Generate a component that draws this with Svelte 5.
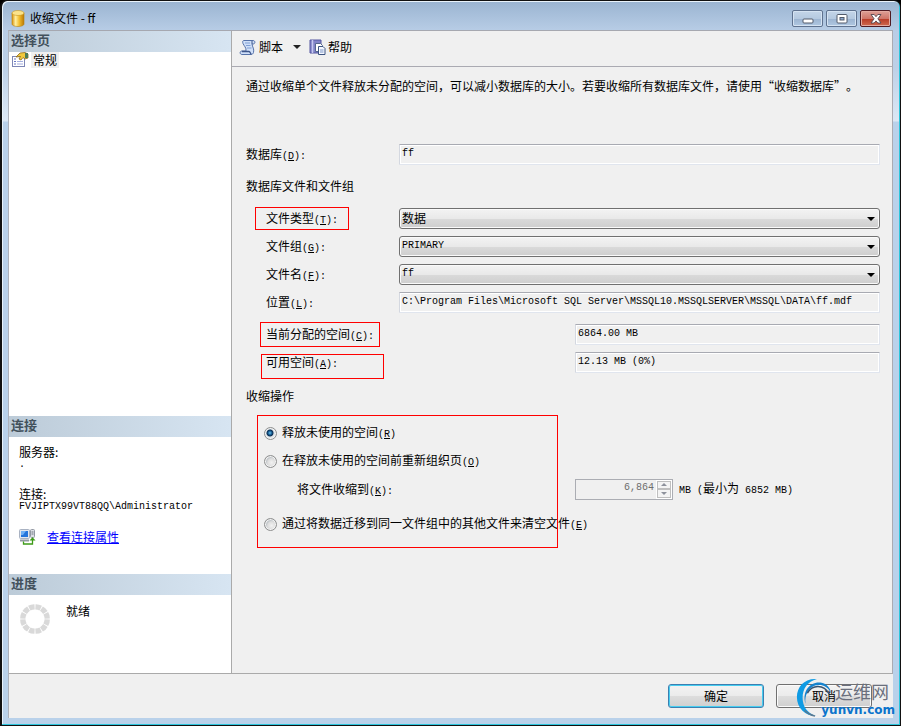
<script lang="ts">
  interface SelectRow {
    id: string;
    label: string;
    key: string;
    value: string;
    latin: boolean;
    mark?: string;
  }

  interface FieldRow {
    id: string;
    label: string;
    key: string;
    value: string;
    narrow: boolean;
    mark?: string;
  }

  const selects: SelectRow[] = [
    { id: 'file-type', label: '文件类型', key: 'T', value: '数据', latin: false, mark: 'mark-type' },
    { id: 'file-group', label: '文件组', key: 'G', value: 'PRIMARY', latin: true },
    { id: 'file-name', label: '文件名', key: 'F', value: 'ff', latin: true }
  ];

  const fields: FieldRow[] = [
    {
      id: 'location',
      label: '位置',
      key: 'L',
      value: 'C:\\Program Files\\Microsoft SQL Server\\MSSQL10.MSSQLSERVER\\MSSQL\\DATA\\ff.mdf',
      narrow: false
    },
    { id: 'allocated', label: '当前分配的空间', key: 'C', value: '6864.00 MB', narrow: true, mark: 'mark-allocated' },
    { id: 'available', label: '可用空间', key: 'A', value: '12.13 MB (0%)', narrow: true, mark: 'mark-available' }
  ];

  const spokes = Array.from({ length: 12 }, (_, i) => i * 30 + 15);

  let action = $state('release');
  let target = $state(6864);
  let targetText = $derived(target.toLocaleString('en-US'));
  let locked = $derived(action !== 'reorganize');
</script>

<div class="window" lang="zh-CN">
  <header class="titlebar">
    <svg class="db-icon" width="14" height="17" viewBox="0 0 14 17" aria-hidden="true">
      <defs>
        <linearGradient id="gold">
          <stop offset="0" stop-color="#d9920c" />
          <stop offset=".3" stop-color="#fff0a0" />
          <stop offset=".6" stop-color="#f3bd2c" />
          <stop offset="1" stop-color="#b97808" />
        </linearGradient>
      </defs>
      <path d="M1 3v11c0 1.400 2.700 2.500 6 2.500s6-1.100 6-2.500V3z" fill="url(#gold)" stroke="#b8830f" stroke-width=".6" />
      <ellipse cx="7" cy="3" rx="6" ry="2.500" fill="#fbe38a" stroke="#c7951f" stroke-width=".6" />
    </svg>
    <h1>收缩文件 - ff</h1>
    <div class="caption">
      <button class="cap" aria-label="最小化">
        <svg width="14" height="12" viewBox="0 0 14 12"><rect x="2" y="6" width="10" height="4" rx="1" fill="#fff" stroke="#525b6b" /></svg>
      </button>
      <button class="cap" aria-label="最大化">
        <svg width="14" height="12" viewBox="0 0 14 12">
          <rect x="2" y="1.500" width="10" height="8.500" rx="1" fill="#fff" stroke="#525b6b" />
          <rect x="5" y="4.500" width="4" height="2.500" fill="#8fabd0" stroke="#525b6b" />
        </svg>
      </button>
      <button class="cap close" aria-label="关闭">
        <svg width="14" height="12" viewBox="0 0 14 12">
          <path d="M2 1.500h3.200L7 3.700l1.800-2.200H12L8.900 5.800 12 10H8.800L7 7.900 5.200 10H2l3.100-4.200z" fill="#fff" stroke="#54454d" stroke-width=".9" />
        </svg>
      </button>
    </div>
  </header>

  <div class="client">
    <div class="body">
      <aside class="sidebar">
        <section class="pages">
          <h2>选择页</h2>
          <a class="page-link" href="#general">
            <svg width="18" height="16" viewBox="0 0 18 16" aria-hidden="true">
              <rect x="1.500" y="4.500" width="12" height="10" fill="#fff" stroke="#7d86b5" />
              <path d="M3 7h2M3 9.500h2M3 12h2" stroke="#6878c4" stroke-width="1.200" />
              <path d="M6 9.500h6M6 12h6" stroke="#a3aee0" stroke-width="1.200" />
              <path d="M5 5l4-4 5-.5 3 1.500v4l-3 1-2-1.500-2 2.500-2-1 1.500-2.500z" fill="#f2c83c" stroke="#8a6a1c" stroke-width=".8" />
              <path d="M14 1h3v5h-3z" fill="#4d7c55" />
            </svg>
            <span>常规</span>
          </a>
        </section>

        <section class="connection">
          <h2>连接</h2>
          <dl>
            <dt>服务器:</dt>
            <dd>.</dd>
            <dt>连接:</dt>
            <dd>FVJIPTX99VT88QQ\Administrator</dd>
          </dl>
          <div class="conn-link">
            <svg width="17" height="16" viewBox="0 0 17 16" aria-hidden="true">
              <rect x=".5" y=".5" width="10" height="9" rx="1" fill="#e3e7ee" stroke="#a9b2c2" />
              <rect x="2" y="2" width="7" height="6" fill="#2475dc" />
              <path d="M2 2h5l-3 4H2z" fill="#6fb0f5" />
              <path d="M1 11.500h9" stroke="#9298a3" stroke-width="2" />
              <rect x="11.500" y=".5" width="4" height="8" rx="1" fill="#dcdfe5" stroke="#9298a3" />
              <path d="M12.500 3h2M12.500 5h2" stroke="#6e7580" />
              <path d="M4.500 12.500v2.500h9v-4" fill="none" stroke="#3d9a17" stroke-width="1.300" />
              <path d="M10.500 11.500l3-3.200 3 3.200z" fill="#3d9a17" />
            </svg>
            <a href="#properties">查看连接属性</a>
          </div>
        </section>

        <section class="progress">
          <h2>进度</h2>
          <div class="status">
            <svg width="32" height="32" viewBox="-16 -16 32 32" aria-hidden="true">
              {#each spokes as angle}
                <path d="M-3.300-14.500Q0-15.500 3.300-14.500L2.200-9.300Q0-9.800-2.200-9.300z" fill="#d9d9d9" transform="rotate({angle})" />
              {/each}
            </svg>
            <span>就绪</span>
          </div>
        </section>
      </aside>

      <main>
        <div class="toolbar">
          <button class="tool">
            <svg width="18" height="17" viewBox="0 0 17 17" aria-hidden="true">
              <path d="M4 1.500h9.500c2.500 0 2.500 3.500 0 3.500h-1c.3 3 2.500 5 1.500 8.500-.5 1.500-1.500 2-2.500 2H2.500c-2.500 0-2.500-3.500 0-3.500h4C7 8.500 4.500 7 3.500 4.500 3 3 3 2 4 1.500z" fill="#cfdff8" stroke="#5471a8" />
              <path d="M5.500 4h5M6.500 6.500h4.500M7.500 9h4.500" stroke="#7f9ed3" />
              <path d="M2.500 12.500h7c1.500 0 1 2.500 2.500 2.500" fill="none" stroke="#3d568a" stroke-width="1.300" />
              <path d="M12.500 2v3" stroke="#3d568a" />
            </svg>
            <span>脚本</span>
          </button>
          <button class="arrow" aria-label="脚本选项"></button>
          <button class="tool">
            <svg width="17" height="17" viewBox="0 0 17 17" aria-hidden="true">
              <path d="M1 1h11v13H1z" fill="#8284c8" stroke="#5557a0" />
              <path d="M3.500 1v13" stroke="#c6c8f0" stroke-width="1.500" />
              <path d="M6.500 4.500h5l2 2v6h-7z" fill="#fff" stroke="#56688f" />
              <path d="M9.500 7.500h4.500l2 2v6h-6.500z" fill="#f5f8ff" stroke="#3d5480" />
              <path d="M11 11h3.500M11 13h3.500" stroke="#7d96c6" />
            </svg>
            <span>帮助</span>
          </button>
        </div>

        <form class="content" onsubmit={(e) => e.preventDefault()}>
          <p class="intro">通过收缩单个文件释放未分配的空间,可以减小数据库的大小。若要收缩所有数据库文件,请使用“收缩数据库”。</p>

          <div class="row database">
            <label for="database">数据库<span class="key">(<u>D</u>):</span></label>
            <input id="database" class="readonly" type="text" readonly value="ff" />
          </div>

          <h3>数据库文件和文件组</h3>

          {#each selects as item}
            <div class="row nested">
              <label for={item.id} class={item.mark}>{item.label}<span class="key">(<u>{item.key}</u>):</span></label>
              <div class="combo">
                <select id={item.id} class:latin={item.latin}>
                  <option>{item.value}</option>
                </select>
              </div>
            </div>
          {/each}

          {#each fields as item}
            <div class="row nested" class:spaced={item.id === 'allocated'}>
              <label for={item.id} class={item.mark}>{item.label}<span class="key">(<u>{item.key}</u>):</span></label>
              <input id={item.id} class="readonly" class:narrow={item.narrow} type="text" readonly value={item.value} />
            </div>
          {/each}

          <h3 class="second">收缩操作</h3>

          <div class="actions" role="radiogroup" aria-label="收缩操作">
            <label class="option">
              <input type="radio" name="action" value="release" bind:group={action} />
              <span>释放未使用的空间<span class="key">(<u>R</u>)</span></span>
            </label>
            <label class="option">
              <input type="radio" name="action" value="reorganize" bind:group={action} />
              <span>在释放未使用的空间前重新组织页<span class="key">(<u>O</u>)</span></span>
            </label>
            <div class="row target">
              <label for="target">将文件收缩到<span class="key">(<u>K</u>):</span></label>
              <div class="amount">
                <div class="spin">
                  <input id="target" type="text" disabled={locked} value={targetText} />
                  <div class="steps">
                    <button type="button" class="up" aria-label="增加" disabled={locked} onclick={() => target++}></button>
                    <button type="button" class="down" aria-label="减少" disabled={locked} onclick={() => target--}></button>
                  </div>
                </div>
                <span><span class="key">MB (</span>最小为<span class="key">{' 6852 MB)'}</span></span>
              </div>
            </div>
            <label class="option last">
              <input type="radio" name="action" value="empty" bind:group={action} />
              <span>通过将数据迁移到同一文件组中的其他文件来清空文件<span class="key">(<u>E</u>)</span></span>
            </label>
          </div>
        </form>
      </main>
    </div>

    <footer>
      <button class="push default">确定</button>
      <button class="push">取消</button>
    </footer>
  </div>

  <div class="brand">
    <svg width="40" height="40" viewBox="0 0 40 42" aria-hidden="true">
      <path d="M22 1C9 0 1 9 1 20c0 12 9 20 20 20C12 37 7 30 7 21 7 11 12 4 22 1z" fill="#0f9be4" />
      <path d="M10 27C6 14 15 3 27 5c5 1 9 5 10 11C33 8 26 6 20 8c-7 3-11 10-10 19z" fill="#1583cf" />
      <path d="M12 16C17 7 29 6 35 17" fill="none" stroke="#35516f" stroke-width="1.500" />
      <path d="M9 34c3 3 7 5 11 6" fill="none" stroke="#5a7891" stroke-width="1.500" />
    </svg>
    <div class="brand-text">
      <span class="brand-name">运维网</span>
      <span class="brand-url">yunvn.com</span>
    </div>
  </div>
</div>

<style>
  :global(body) {
    margin: 0;
    background: #000;
  }

  .window {
    position: relative;
    display: flex;
    flex-direction: column;
    box-sizing: border-box;
    min-height: 100vh;
    padding: 0 7px 7px 6px;
    border: 1px solid #111;
    border-left-width: 2px;
    border-radius: 7px 7px 0 0;
    background: linear-gradient(#9ab4d1 0, #b8cde6 30px, #bcd0e7 66px, #dce8f5 120px, #b9d1ea 121px);
    box-shadow: inset -1px -1px #2cc5dc, inset 1px 1px #e9f3fb;
    font-family: "Noto Sans CJK SC", "Liberation Sans", sans-serif;
    font-size: 12px;
    line-height: 16px;
    color: #000;
  }

  button,
  input,
  select {
    font: inherit;
    color: inherit;
    margin: 0;
  }

  .titlebar {
    display: flex;
    align-items: center;
    height: 29px;
    padding: 0 2px 0 3px;
  }

  .db-icon {
    margin-top: 6px;
  }

  .titlebar h1 {
    flex: 1;
    margin: 4px 0 0 5px;
    font-size: 12px;
    font-weight: 400;
  }

  .caption {
    display: flex;
    gap: 3px;
    margin-top: 6px;
  }

  .cap {
    display: flex;
    align-items: center;
    justify-content: center;
    width: 31px;
    height: 17px;
    padding: 0;
    border: 1px solid #5f728f;
    border-radius: 2px;
    background: linear-gradient(#c4d5e8 0, #b5c9e0 50%, #9bb3d0 51%, #b0c8e2 100%);
    box-shadow: inset 0 0 0 1px #d5e3f2;
  }

  .cap.close {
    border-color: #4f1a22;
    background: linear-gradient(#dda097 0, #cf7669 50%, #b73a26 51%, #cf6a50 100%);
    box-shadow: inset 0 0 0 1px #e3aaa0;
  }

  .client {
    flex: 1;
    display: flex;
    flex-direction: column;
    border-left: 1px solid #aeb2bb;
    border-top: 1px solid #a6a8b0;
    background: #f0f0f0;
  }

  .body {
    flex: 1;
    display: flex;
    border-right: 1px solid #aaaab2;
    border-bottom: 1px solid #aaaaaa;
  }

  .sidebar {
    display: flex;
    flex-direction: column;
    flex: none;
    width: 222px;
    border-right: 1px solid #aaaaaa;
    background: #fff;
  }

  .sidebar h2 {
    margin: 0;
    padding: 0 2px 4px;
    font-size: 13px;
    line-height: 17px;
    font-weight: 700;
    color: #43515c;
    background: linear-gradient(90deg, #bccbd8, #d7e5f2);
  }

  .pages {
    flex: 1;
  }

  .page-link {
    display: inline-flex;
    align-items: center;
    gap: 2px;
    padding: 0 2px;
    color: #000;
    text-decoration: none;
  }

  .page-link span {
    padding: 0 2px;
    background: #f0f0f0;
  }

  .connection {
    height: 158px;
  }

  dl {
    margin: 8px 0 0 10px;
    line-height: 14px;
  }

  dt,
  dd {
    margin: 0;
  }

  dd {
    margin-bottom: 16px;
    font-family: "Liberation Mono", monospace;
    font-size: 10px;
    line-height: 12px;
  }

  .conn-link {
    display: flex;
    align-items: center;
    gap: 11px;
    padding-left: 10px;
  }

  .conn-link a {
    color: #00f;
  }

  .progress {
    height: 99px;
  }

  .status {
    display: flex;
    gap: 15px;
    padding: 8px 10px;
  }

  main {
    flex: 1;
    min-width: 0;
  }

  .toolbar {
    display: flex;
    align-items: center;
    box-sizing: border-box;
    height: 36px;
    padding: 0 0 3px 7px;
    border-bottom: 1px solid #aaaab2;
  }

  .tool {
    display: flex;
    align-items: center;
    gap: 2px;
    padding: 0;
    border: 0;
    background: none;
  }

  .arrow {
    width: 8px;
    margin: 0 8px 0 10px;
    padding: 0;
    border: 0;
    background: none;
  }

  .arrow::before {
    content: '';
    display: block;
    border: 4px solid transparent;
    border-top-color: #222;
    border-bottom: 0;
  }

  .content {
    padding: 5px 12px 20px 14px;
  }

  .intro {
    margin: 0;
    line-height: 28px;
    text-spacing-trim: space-all;
    font-kerning: none;
    font-feature-settings: "fwid";
  }

  .row {
    display: grid;
    grid-template-columns: 153px 176px 1fr;
    align-items: center;
    height: 28px;
  }

  .row.database {
    margin-top: 40px;
  }

  .row.nested label {
    margin-left: 20px;
  }

  .row.spaced {
    margin-top: 4px;
  }

  .row label {
    position: relative;
    justify-self: start;
    padding-top: 2px;
    white-space: nowrap;
  }

  .key {
    font-family: "Liberation Mono", monospace;
    font-size: 10px;
    white-space: pre;
  }

  h3 {
    margin: 0;
    font-size: 12px;
    font-weight: 400;
    line-height: 36px;
  }

  h3.second {
    margin-top: 2px;
  }

  .readonly {
    grid-column: 2 / -1;
    box-sizing: border-box;
    width: 100%;
    height: 21px;
    padding: 0 2px 2px;
    border: 1px solid #e0e5ee;
    border-top-color: #a8aab2;
    border-left-color: #d4d8e0;
    border-radius: 1px;
    background: #f0f0f0;
    box-shadow: inset 0 0 0 1px #fff;
    font-family: "Liberation Mono", monospace;
    font-size: 10px;
    outline: none;
  }

  .readonly.narrow {
    grid-column: 3 / -1;
  }

  .combo {
    position: relative;
    grid-column: 2 / -1;
    display: flex;
  }

  .combo::after {
    content: '';
    position: absolute;
    right: 5px;
    top: 9px;
    border: 4px solid transparent;
    border-top-color: #000;
    border-bottom: 0;
    pointer-events: none;
  }

  select {
    flex: 1;
    appearance: none;
    height: 21px;
    padding: 0 20px 0 2px;
    border: 1px solid #707070;
    border-radius: 3px;
    background: linear-gradient(#f3f3f3 0, #e9e9e9 50%, #dadada 51%, #cecece 100%);
    box-shadow: inset 0 0 0 1px #fafafa;
  }

  select.latin {
    font-family: "Liberation Mono", monospace;
    font-size: 10px;
  }

  .mark-type::after,
  .mark-allocated::after,
  .mark-available::after,
  .actions::after {
    content: '';
    position: absolute;
    border: 1px solid #f00;
    pointer-events: none;
  }

  .mark-type::after {
    inset: -1px -11px -1px -11px;
  }

  .mark-allocated::after {
    inset: -2px -6px -2px -6px;
  }

  .mark-available::after {
    inset: 2px -46px -6px -5px;
  }

  .actions {
    position: relative;
    padding: 5px 0 10px 18px;
  }

  .actions::after {
    left: 11px;
    top: 1px;
    bottom: 0;
    width: 299px;
  }

  .option {
    display: flex;
    align-items: center;
    gap: 5px;
    height: 28px;
  }

  .option.last {
    margin-top: 7px;
  }

  input[type='radio'] {
    appearance: none;
    box-sizing: border-box;
    width: 13px;
    height: 13px;
    border: 1px solid #8e8f8f;
    border-radius: 50%;
    background: radial-gradient(circle at 60% 60%, #f2f2f2 0, #dcdcdc 4px, #c4c8cc 5px);
    box-shadow: inset 0 0 0 1px #f4f4f4;
  }

  input[type='radio']:checked {
    background: radial-gradient(circle at 45% 45%, #6cc4ee 0, #12568c 2px, #0d2f52 3px, #dfe4e8 4px);
  }

  .row.target {
    grid-template-columns: 311px 1fr;
  }

  .row.target label {
    margin-left: 33px;
  }

  .amount {
    display: flex;
    align-items: center;
    gap: 6px;
    white-space: nowrap;
  }

  .spin {
    display: flex;
    box-sizing: border-box;
    width: 98px;
    height: 21px;
    border: 1px solid #abadb3;
  }

  .spin input {
    flex: 1;
    min-width: 0;
    padding: 0 2px 3px;
    border: 0;
    background: #f0f0f0;
    color: #6d6d6d;
    font-family: "Liberation Mono", monospace;
    font-size: 10px;
    text-align: right;
  }

  .steps {
    display: flex;
    flex-direction: column;
    width: 14px;
    padding: 1px;
    background: #fff;
  }

  .steps button {
    flex: 1;
    display: flex;
    align-items: center;
    justify-content: center;
    padding: 0;
    border: 1px solid #bfbfbf;
    background: #f4f4f4;
  }

  .steps button::before {
    content: '';
    border: 3px solid transparent;
  }

  .steps .up::before {
    border-top: 0;
    border-bottom-color: #8e929c;
  }

  .steps .down::before {
    border-bottom: 0;
    border-top-color: #8e929c;
  }

  footer {
    display: flex;
    justify-content: flex-end;
    gap: 12px;
    padding: 10px 21px 10px 0;
  }

  .push {
    width: 96px;
    height: 24px;
    padding: 0;
    border: 1px solid #707070;
    border-radius: 3px;
    background: linear-gradient(#f3f3f3 0, #ebebeb 50%, #dddddd 51%, #cfcfcf 100%);
    box-shadow: inset 0 0 0 1px #fbfbfb;
  }

  .push.default {
    border-color: #3c7fb1;
    box-shadow: inset 0 0 0 1px #46cdf0;
  }

  .brand {
    position: absolute;
    right: 5px;
    bottom: 7px;
    display: flex;
    align-items: flex-end;
    pointer-events: none;
  }

  .brand-text {
    display: flex;
    flex-direction: column;
    align-items: flex-end;
    margin-left: -14px;
  }

  .brand-name {
    padding-right: 6px;
    font-size: 18px;
    line-height: 22px;
    color: #6a6f7d;
  }

  .brand-url {
    font-family: "DejaVu Sans", sans-serif;
    font-size: 12px;
    font-weight: 700;
    line-height: 16px;
    color: #0b74cc;
  }
</style>
